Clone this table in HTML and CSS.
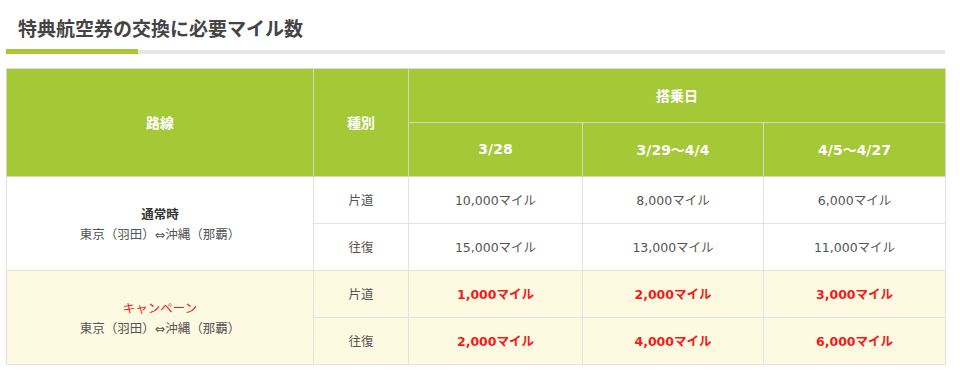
FILE: index.html
```html
<!DOCTYPE html>
<html lang="ja">
<head>
<meta charset="utf-8">
<link rel="stylesheet" href="styles.css">
</head>
<body>
<div class="wrap">
  <h2 class="title">特典航空券の交換に必要マイル数</h2>
  <div class="rule"><span class="rule-accent"></span><span class="rule-line"></span></div>
  <table class="miles">
    <colgroup>
      <col class="c-route"><col class="c-type"><col class="c-d1"><col class="c-d2"><col class="c-d3">
    </colgroup>
    <thead>
      <tr class="h1">
        <th rowspan="2">路線</th>
        <th rowspan="2">種別</th>
        <th colspan="3">搭乗日</th>
      </tr>
      <tr class="h2">
        <th>3/28</th>
        <th>3/29～4/4</th>
        <th>4/5～4/27</th>
      </tr>
    </thead>
    <tbody>
      <tr>
        <td rowspan="2" class="route"><strong>通常時</strong><br>東京（羽田）⇔沖縄（那覇）</td>
        <td>片道</td>
        <td>10,000マイル</td>
        <td>8,000マイル</td>
        <td>6,000マイル</td>
      </tr>
      <tr>
        <td>往復</td>
        <td>15,000マイル</td>
        <td>13,000マイル</td>
        <td>11,000マイル</td>
      </tr>
      <tr class="camp">
        <td rowspan="2" class="route"><span class="red-label">キャンペーン</span><br>東京（羽田）⇔沖縄（那覇）</td>
        <td>片道</td>
        <td class="red">1,000マイル</td>
        <td class="red">2,000マイル</td>
        <td class="red">3,000マイル</td>
      </tr>
      <tr class="camp">
        <td>往復</td>
        <td class="red">2,000マイル</td>
        <td class="red">4,000マイル</td>
        <td class="red">6,000マイル</td>
      </tr>
    </tbody>
  </table>
</div>
</body>
</html>
```
FILE: styles.css
```css
html, body {
  margin: 0;
  padding: 0;
  background: #fff;
}
body {
  font-family: "DejaVu Sans", "Noto Sans CJK JP", sans-serif;
  color: #555;
}
.wrap {
  width: 939px;
  margin-left: 6px;
}
.title {
  margin: 0;
  padding: 14px 0 7px 12px;
  font-family: "Noto Sans CJK JP", sans-serif;
  font-size: 19px;
  line-height: 28px;
  font-weight: bold;
  color: #444;
}
.rule {
  display: flex;
  align-items: flex-end;
  height: 5px;
}
.rule-accent {
  width: 132px;
  height: 5px;
  background: #a5c837;
}
.rule-line {
  flex: 1;
  height: 4px;
  background: #e6e6e6;
}
.miles {
  margin-top: 14px;
  width: 939px;
  table-layout: fixed;
  border-collapse: collapse;
  font-size: 12.5px;
}
.c-route { width: 307px; }
.c-type { width: 95px; }
.c-d1 { width: 174px; }
.c-d2 { width: 181px; }
.c-d3 { width: 182px; }
.miles th, .miles td {
  border: 1px solid #e3e3e3;
  text-align: center;
  vertical-align: middle;
  padding: 0 0 2px;
}
.miles th {
  background: #a5c837;
  color: #fff;
  font-weight: bold;
  font-size: 14px;
  border-color: #d3dbbf;
  height: 51px;
}
.miles thead tr.h1 th { border-top-color: #ddd; }
.miles td {
  height: 44px;
  color: #555;
}
.miles td.route {
  line-height: 20px;
  padding: 2px 0 0;
}
.route strong {
  color: #333;
  font-weight: bold;
}
.red-label {
  color: #f31a1a;
}
.camp td {
  background: #fef9e1;
}
.miles td.red {
  color: #f31a1a;
  font-weight: bold;
}
```
